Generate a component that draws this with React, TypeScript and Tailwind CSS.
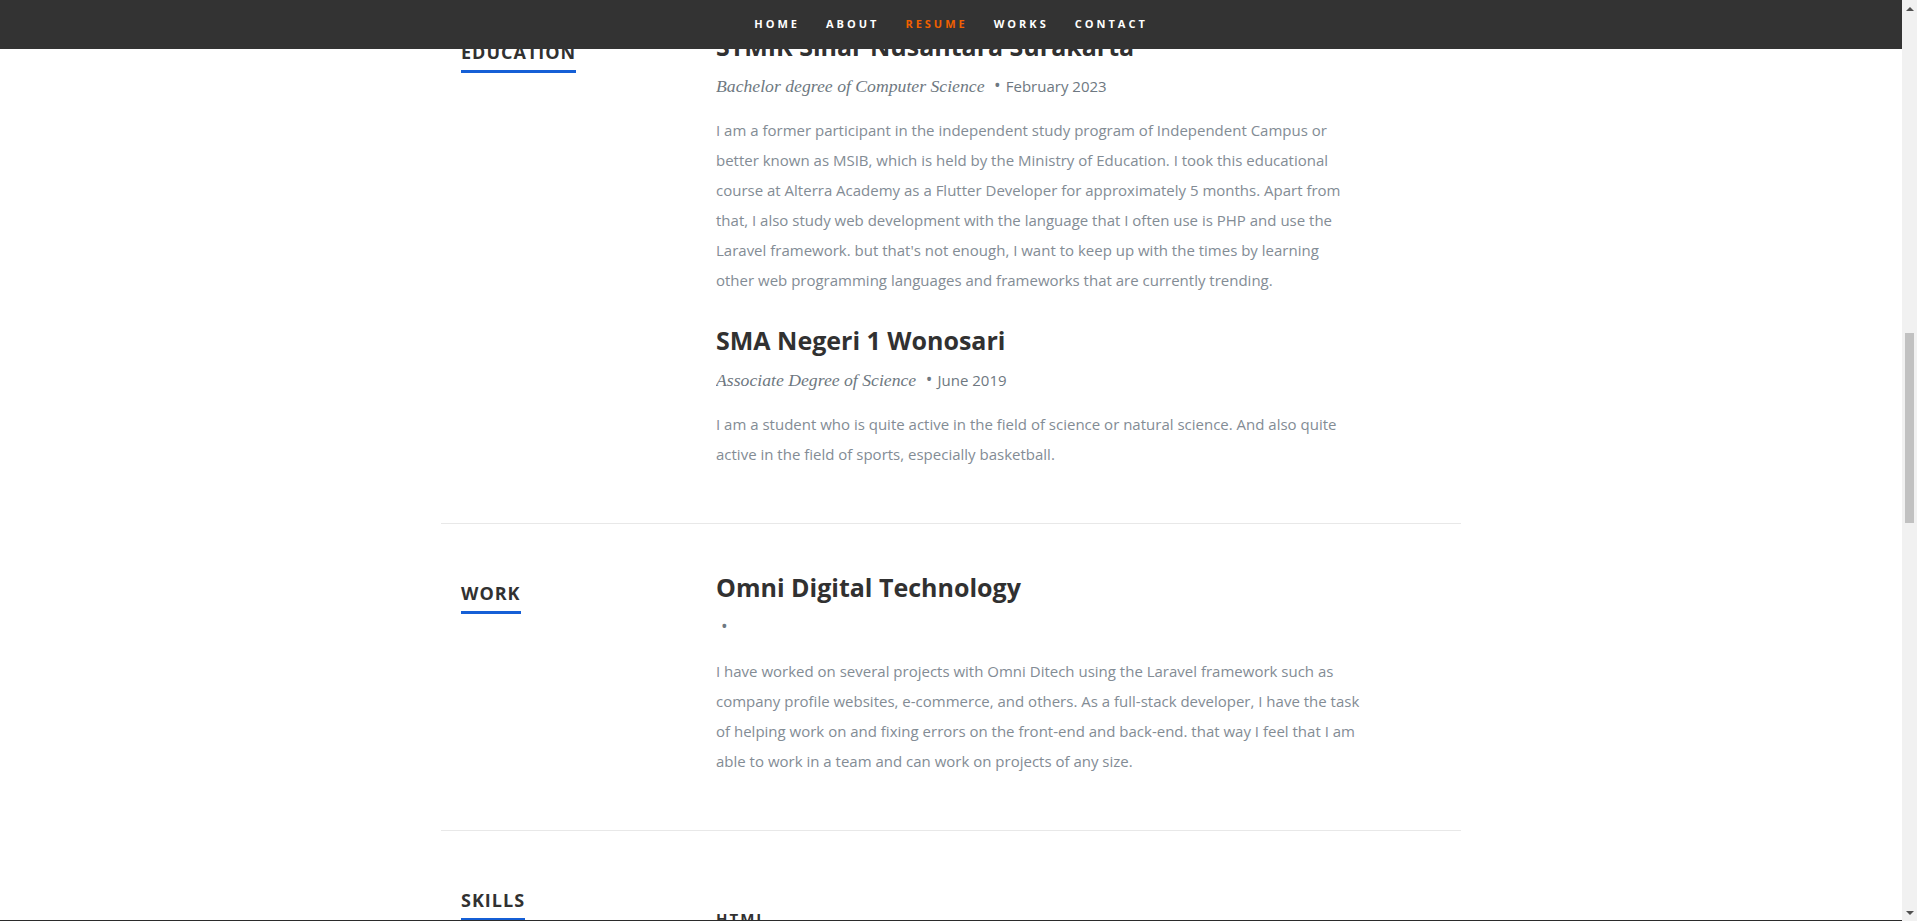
import React from "react";

type Entry = {
  title: string;
  info: string;
  date: string;
  text: string;
};

const navItems = ["Home", "About", "Resume", "Works", "Contact"];

const education: Entry[] = [
  {
    title: "STMIK Sinar Nusantara Surakarta",
    info: "Bachelor degree of Computer Science",
    date: "February 2023",
    text: "I am a former participant in the independent study program of Independent Campus or better known as MSIB, which is held by the Ministry of Education. I took this educational course at Alterra Academy as a Flutter Developer for approximately 5 months. Apart from that, I also study web development with the language that I often use is PHP and use the Laravel framework. but that's not enough, I want to keep up with the times by learning other web programming languages and frameworks that are currently trending.",
  },
  {
    title: "SMA Negeri 1 Wonosari",
    info: "Associate Degree of Science",
    date: "June 2019",
    text: "I am a student who is quite active in the field of science or natural science. And also quite active in the field of sports, especially basketball.",
  },
];

const work: Entry[] = [
  {
    title: "Omni Digital Technology",
    info: "",
    date: "",
    text: "I have worked on several projects with Omni Ditech using the Laravel framework such as company profile websites, e-commerce, and others. As a full-stack developer, I have the task of helping work on and fixing errors on the front-end and back-end. that way I feel that I am able to work in a team and can work on projects of any size.",
  },
];

const SectionLabel: React.FC<{ label: string }> = ({ label }) => (
  <div className="px-5 pt-[9px]">
    <h1 className="text-[18px] leading-6 font-bold uppercase tracking-[1px] text-[#313131]">
      <span className="border-b-[3px] border-[#155fd6] pb-1.5">{label}</span>
    </h1>
  </div>
);

const Block: React.FC<{ label: string; entries: Entry[] }> = ({ label, entries }) => (
  <div className="grid grid-cols-[255px_765px] border-b border-[#e8e8e8] pb-6 mb-12">
    <SectionLabel label={label} />
    <div className="pl-5 pr-[100.5px]">
      {entries.map((e) => (
        <div key={e.title}>
          <h3 className="text-[25px] leading-[30px] font-bold text-[#313131]">{e.title}</h3>
          <p className="mt-3 mb-[18px] h-6 overflow-hidden whitespace-nowrap text-[17.7px] leading-6 text-[#6e7881]">
            <em className="font-['Liberation_Serif',serif] italic">{e.info}</em>
            {" "}
            <span className="mx-[5px]">&bull;</span>
            <span className="text-[15px] not-italic">{e.date}</span>
          </p>
          <p className="mb-[30px] text-[15px] leading-[30px] text-[#838c95]">{e.text}</p>
        </div>
      ))}
    </div>
  </div>
);

export default function App() {
  return (
    <div className="flex h-[921px] w-full overflow-hidden bg-white font-['Open_Sans',sans-serif]">
      <div className="relative flex-1 overflow-hidden">
        <nav className="absolute top-0 left-0 right-0 z-10 h-[49px] bg-[#333333]">
          <ul className="flex justify-center">
            {navItems.map((item) => (
              <li key={item}>
                <a
                  href="#"
                  className={
                    item === "Resume"
                      ? "block px-[13px] text-[11px] leading-[48px] font-bold uppercase tracking-[3px] text-[#f06000]"
                      : "block px-[13px] text-[11px] leading-[48px] font-bold uppercase tracking-[3px] text-white"
                  }
                >
                  {item}
                </a>
              </li>
            ))}
          </ul>
        </nav>

        <section className="mx-auto w-[1020px] pt-[31px]">
          <Block label="Education" entries={education} />
          <Block label="Work" entries={work} />
          <div className="grid grid-cols-[255px_765px]">
            <SectionLabel label="Skills" />
            <div className="pl-5 pt-[26px]">
              <em className="not-italic text-[15px] leading-[27px] font-bold uppercase tracking-[2px] text-[#313131]">
                HTML
              </em>
            </div>
          </div>
        </section>

        <div className="absolute bottom-0 left-0 right-0 h-px bg-[#2b2b2b]" />
      </div>

      <div className="flex w-[15px] flex-col bg-[#f1f1f1]">
        <div className="flex h-[17px] items-center justify-center">
          <div className="h-0 w-0 border-x-4 border-b-4 border-x-transparent border-b-[#505050]" />
        </div>
        <div className="flex-1">
          <div className="mx-[3px] mt-[316px] h-[190px] bg-[#c1c1c1]" />
        </div>
        <div className="flex h-[17px] items-center justify-center">
          <div className="h-0 w-0 border-x-4 border-t-4 border-x-transparent border-t-[#505050]" />
        </div>
      </div>
    </div>
  );
}
